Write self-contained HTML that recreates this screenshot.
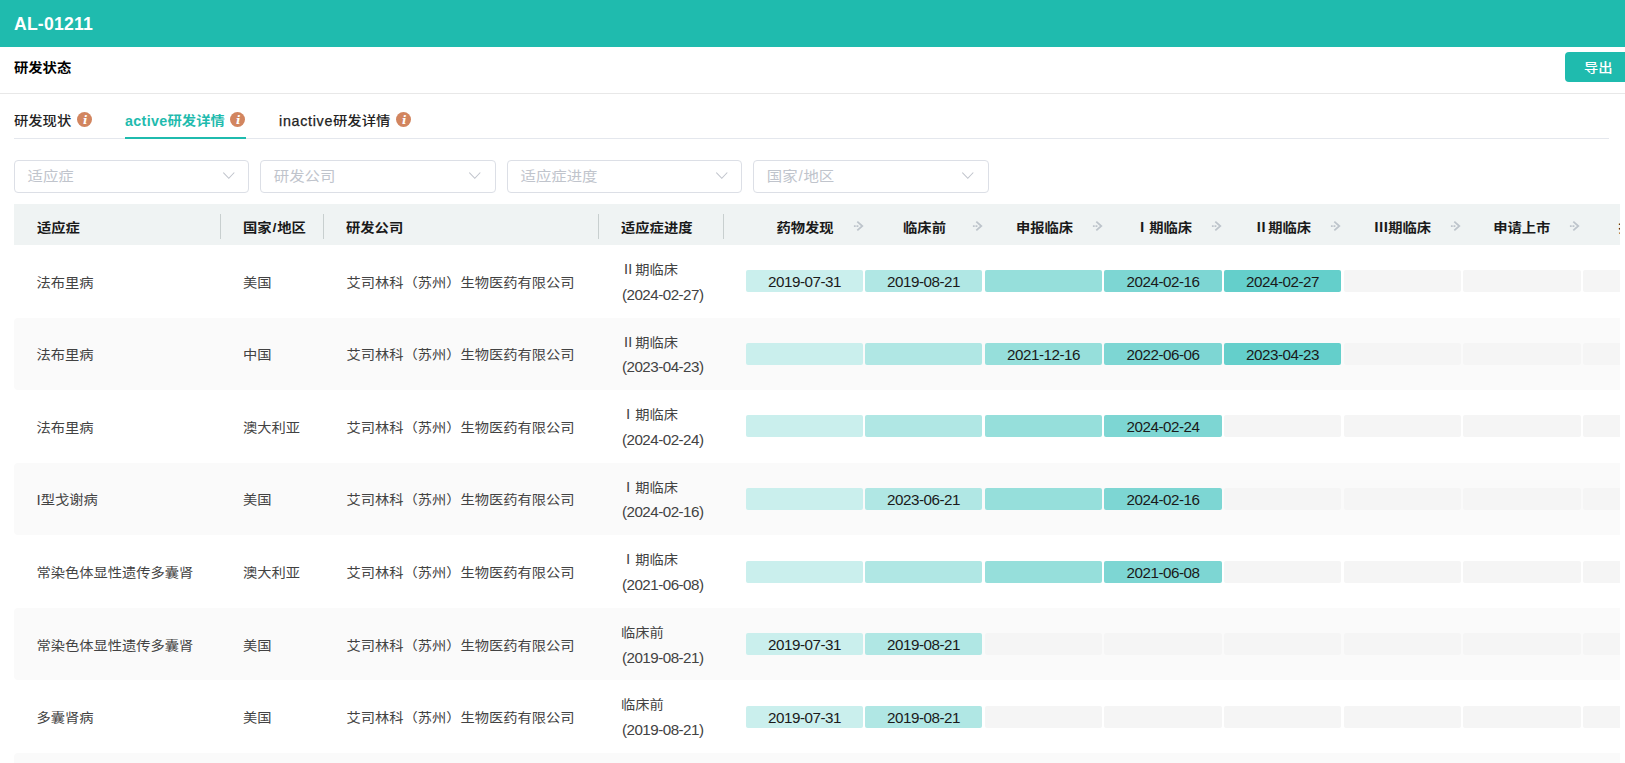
<!DOCTYPE html>
<html lang="zh-CN">
<head>
<meta charset="utf-8">
<title>AL-01211 研发状态</title>
<style>
*{box-sizing:border-box;margin:0;padding:0}
html,body{width:1625px;height:763px;overflow:hidden;background:#fff}
body{font-family:"Liberation Sans", "Noto Sans CJK SC", sans-serif;font-size:14.3px;color:#333;position:relative}
.abs{position:absolute;white-space:nowrap}
.cj{display:inline-block;transform:scaleY(.9);transform-origin:50% 49%}
.topbar{position:absolute;left:0;top:0;width:1625px;height:47px;background:#1fbbae}
.title{left:14px;top:10px;font-size:17.6px;font-weight:700;color:#fff;line-height:28px;letter-spacing:.21px}
.sect{left:14px;top:54px;font-weight:700;color:#000;line-height:28px}
.hr1{position:absolute;left:0;top:93px;width:1625px;height:1px;background:#e8e8e8}
.export{position:absolute;left:1565px;top:52px;width:70px;height:30px;background:#1fbbae;border-radius:4px;color:#fff;font-size:14.3px;line-height:32px;padding-left:19px;font-weight:500}
.tab{top:107px;line-height:28px;color:#222;font-weight:500}
.tab.on{color:#1fbbae;font-weight:700}
.tab.on .la{letter-spacing:.34px;-webkit-text-stroke:0}
.tab .la{letter-spacing:.7px;-webkit-text-stroke:.25px #222}
.sl{margin:0 .8px}
.bi{font-size:15.2px;margin-right:-.1px}
.info{position:absolute;width:15px;height:15px;border-radius:50%;background:#d2855f;top:112px}
.info svg{position:absolute;left:0;top:0}
.tabline{position:absolute;left:14px;top:138px;width:1595px;height:1px;background:#e4e7ed}
.tabink{position:absolute;left:125px;top:137px;width:121px;height:2px;background:#1fbbae}
.sel{position:absolute;top:160px;height:32.5px;border:1px solid #dcdfe6;border-radius:4px;background:#fff;color:#c0c4cc;font-size:15.4px;line-height:32px;padding-left:12.5px}
.sel svg{position:absolute;left:208px;top:11px}
.thead{position:absolute;left:14px;top:204px;width:1606px;height:41px;background:#eff3f3;overflow:hidden}
.th{font-weight:700;color:#1a1a1a;line-height:24px;top:12px}
.sep{position:absolute;top:10px;width:1px;height:25px;background:#c8cfcf}
.arrow{position:absolute;top:15px}
.row{position:absolute;left:14px;width:1606px;overflow:hidden}
.td.dt{letter-spacing:-.53px;font-size:15.2px}
.row.odd{background:#fafafa;border-radius:4px 0 0 4px}
.td{line-height:24px;color:#424242;font-size:14.25px}
.bar{position:absolute;height:22px;width:117px;border-radius:2px;font-size:15.2px;letter-spacing:-.47px;line-height:24px;text-align:center;color:#1a1a1a;background:#f5f5f5}
.b0{background:#caefed}.b1{background:#b0e7e4}.b2{background:#96dfdb}.b3{background:#7dd6d3}.b4{background:#64cfcb}
</style>
</head>
<body>
<div class="topbar"><div class="abs title">AL-01211</div></div>
<div class="abs sect cj">研发状态</div>
<div class="export"><span class="cj">导出</span></div>
<div class="hr1"></div>
<div class="tabs">
<div class="abs tab cj" style="left:14px">研发现状</div><span class="info" style="left:77px"><svg width="15" height="15" viewBox="0 0 15 15"><text x="8.2" y="12.2" text-anchor="middle" font-family="'DejaVu Serif', 'Liberation Serif', serif" font-style="italic" font-weight="700" font-size="11.8" fill="#fff">i</text></svg></span>
<div class="abs tab on" style="left:125px"><span class="la">active</span><span class="cj">研发详情</span></div><span class="info" style="left:230.3px"><svg width="15" height="15" viewBox="0 0 15 15"><text x="8.2" y="12.2" text-anchor="middle" font-family="'DejaVu Serif', 'Liberation Serif', serif" font-style="italic" font-weight="700" font-size="11.8" fill="#fff">i</text></svg></span>
<div class="abs tab" style="left:279px"><span class="la">inactive</span><span class="cj">研发详情</span></div><span class="info" style="left:395.5px"><svg width="15" height="15" viewBox="0 0 15 15"><text x="8.2" y="12.2" text-anchor="middle" font-family="'DejaVu Serif', 'Liberation Serif', serif" font-style="italic" font-weight="700" font-size="11.8" fill="#fff">i</text></svg></span>
<div class="tabline"></div><div class="tabink"></div>
</div>
<div class="sel" style="left:14px;width:234.5px"><span class="cj">适应症</span><svg width="12" height="8" viewBox="0 0 12 8"><path d="M0.3 0.5 L5.8 6.3 L11.3 0.5" fill="none" stroke="#c0c4cc" stroke-width="1.05"/></svg></div>
<div class="sel" style="left:260.3px;width:235.4px"><span class="cj">研发公司</span><svg width="12" height="8" viewBox="0 0 12 8"><path d="M0.3 0.5 L5.8 6.3 L11.3 0.5" fill="none" stroke="#c0c4cc" stroke-width="1.05"/></svg></div>
<div class="sel" style="left:507px;width:235.0px"><span class="cj">适应症进度</span><svg width="12" height="8" viewBox="0 0 12 8"><path d="M0.3 0.5 L5.8 6.3 L11.3 0.5" fill="none" stroke="#c0c4cc" stroke-width="1.05"/></svg></div>
<div class="sel" style="left:753.3px;width:235.4px"><span class="cj">国家<span class="sl">/</span>地区</span><svg width="12" height="8" viewBox="0 0 12 8"><path d="M0.3 0.5 L5.8 6.3 L11.3 0.5" fill="none" stroke="#c0c4cc" stroke-width="1.05"/></svg></div>
<div class="thead">
<div class="abs th cj" style="left:23px">适应症</div><div class="abs th cj" style="left:229px">国家<span class="sl">/</span>地区</div><div class="abs th cj" style="left:332px">研发公司</div><div class="abs th cj" style="left:607px">适应症进度</div><div class="sep" style="left:206px"></div><div class="sep" style="left:309px"></div><div class="sep" style="left:584px"></div><div class="sep" style="left:709px"></div>
<div class="abs th cj" style="left:731.0px;width:120px;text-align:center">药物发现</div><span class="arrow" style="left:839.0px"><svg width="12" height="12" viewBox="0 0 12 12"><path d="M0.9 6 H2.7 M3.5 6 H5.4 M4.3 1.6 L9.3 6 L4.3 10.4" fill="none" stroke="#bdc4cb" stroke-width="1.75"/></svg></span>
<div class="abs th cj" style="left:850.5px;width:120px;text-align:center">临床前</div><span class="arrow" style="left:958.3px"><svg width="12" height="12" viewBox="0 0 12 12"><path d="M0.9 6 H2.7 M3.5 6 H5.4 M4.3 1.6 L9.3 6 L4.3 10.4" fill="none" stroke="#bdc4cb" stroke-width="1.75"/></svg></span>
<div class="abs th cj" style="left:970.5px;width:120px;text-align:center">申报临床</div><span class="arrow" style="left:1077.6px"><svg width="12" height="12" viewBox="0 0 12 12"><path d="M0.9 6 H2.7 M3.5 6 H5.4 M4.3 1.6 L9.3 6 L4.3 10.4" fill="none" stroke="#bdc4cb" stroke-width="1.75"/></svg></span>
<div class="abs th cj" style="left:1089.5px;width:120px;text-align:center">Ⅰ期临床</div><span class="arrow" style="left:1196.9px"><svg width="12" height="12" viewBox="0 0 12 12"><path d="M0.9 6 H2.7 M3.5 6 H5.4 M4.3 1.6 L9.3 6 L4.3 10.4" fill="none" stroke="#bdc4cb" stroke-width="1.75"/></svg></span>
<div class="abs th cj" style="left:1208.5px;width:120px;text-align:center">Ⅱ期临床</div><span class="arrow" style="left:1316.2px"><svg width="12" height="12" viewBox="0 0 12 12"><path d="M0.9 6 H2.7 M3.5 6 H5.4 M4.3 1.6 L9.3 6 L4.3 10.4" fill="none" stroke="#bdc4cb" stroke-width="1.75"/></svg></span>
<div class="abs th cj" style="left:1328.5px;width:120px;text-align:center">Ⅲ期临床</div><span class="arrow" style="left:1435.5px"><svg width="12" height="12" viewBox="0 0 12 12"><path d="M0.9 6 H2.7 M3.5 6 H5.4 M4.3 1.6 L9.3 6 L4.3 10.4" fill="none" stroke="#bdc4cb" stroke-width="1.75"/></svg></span>
<div class="abs th cj" style="left:1447.8px;width:120px;text-align:center">申请上市</div><span class="arrow" style="left:1554.8px"><svg width="12" height="12" viewBox="0 0 12 12"><path d="M0.9 6 H2.7 M3.5 6 H5.4 M4.3 1.6 L9.3 6 L4.3 10.4" fill="none" stroke="#bdc4cb" stroke-width="1.75"/></svg></span>
<div class="abs th cj" style="left:1573.1px;width:120px;text-align:center">批准上市</div><span class="arrow" style="left:1674.1px"><svg width="12" height="12" viewBox="0 0 12 12"><path d="M0.9 6 H2.7 M3.5 6 H5.4 M4.3 1.6 L9.3 6 L4.3 10.4" fill="none" stroke="#bdc4cb" stroke-width="1.75"/></svg></span>
</div>
<div class="row" style="top:245px;height:73px"><div class="abs td cj" style="left:22.5px;top:26px">法布里病</div><div class="abs td cj" style="left:229px;top:26px">美国</div><div class="abs td cj" style="left:332.6px;top:26px">艾司林科（苏州）生物医药有限公司</div><div class="abs td cj" style="left:607px;top:13px">Ⅱ期临床</div><div class="abs td dt" style="left:608px;top:38px">(2024-02-27)</div>
<div class="bar b0" style="left:732px;top:25px;width:117px">2019-07-31</div><div class="bar b1" style="left:851px;top:25px;width:117px">2019-08-21</div><div class="bar b2" style="left:971px;top:25px;width:117px"></div><div class="bar b3" style="left:1090px;top:25px;width:118px">2024-02-16</div><div class="bar b4" style="left:1210px;top:25px;width:117px">2024-02-27</div><div class="bar" style="left:1330px;top:25px;width:117px"></div><div class="bar" style="left:1449px;top:25px;width:118px"></div><div class="bar" style="left:1569px;top:25px;width:117px"></div></div>
<div class="row odd" style="top:318px;height:72px"><div class="abs td cj" style="left:22.5px;top:25px">法布里病</div><div class="abs td cj" style="left:229px;top:25px">中国</div><div class="abs td cj" style="left:332.6px;top:25px">艾司林科（苏州）生物医药有限公司</div><div class="abs td cj" style="left:607px;top:13px">Ⅱ期临床</div><div class="abs td dt" style="left:608px;top:37px">(2023-04-23)</div>
<div class="bar b0" style="left:732px;top:25px;width:117px"></div><div class="bar b1" style="left:851px;top:25px;width:117px"></div><div class="bar b2" style="left:971px;top:25px;width:117px">2021-12-16</div><div class="bar b3" style="left:1090px;top:25px;width:118px">2022-06-06</div><div class="bar b4" style="left:1210px;top:25px;width:117px">2023-04-23</div><div class="bar" style="left:1330px;top:25px;width:117px"></div><div class="bar" style="left:1449px;top:25px;width:118px"></div><div class="bar" style="left:1569px;top:25px;width:117px"></div></div>
<div class="row" style="top:390px;height:73px"><div class="abs td cj" style="left:22.5px;top:26px">法布里病</div><div class="abs td cj" style="left:229px;top:26px">澳大利亚</div><div class="abs td cj" style="left:332.6px;top:26px">艾司林科（苏州）生物医药有限公司</div><div class="abs td cj" style="left:607px;top:13px">Ⅰ期临床</div><div class="abs td dt" style="left:608px;top:38px">(2024-02-24)</div>
<div class="bar b0" style="left:732px;top:25px;width:117px"></div><div class="bar b1" style="left:851px;top:25px;width:117px"></div><div class="bar b2" style="left:971px;top:25px;width:117px"></div><div class="bar b3" style="left:1090px;top:25px;width:118px">2024-02-24</div><div class="bar" style="left:1210px;top:25px;width:117px"></div><div class="bar" style="left:1330px;top:25px;width:117px"></div><div class="bar" style="left:1449px;top:25px;width:118px"></div><div class="bar" style="left:1569px;top:25px;width:117px"></div></div>
<div class="row odd" style="top:463px;height:72px"><div class="abs td" style="left:22.5px;top:25px"><span class="bi">I</span><span class="cj">型戈谢病</span></div><div class="abs td cj" style="left:229px;top:25px">美国</div><div class="abs td cj" style="left:332.6px;top:25px">艾司林科（苏州）生物医药有限公司</div><div class="abs td cj" style="left:607px;top:13px">Ⅰ期临床</div><div class="abs td dt" style="left:608px;top:37px">(2024-02-16)</div>
<div class="bar b0" style="left:732px;top:25px;width:117px"></div><div class="bar b1" style="left:851px;top:25px;width:117px">2023-06-21</div><div class="bar b2" style="left:971px;top:25px;width:117px"></div><div class="bar b3" style="left:1090px;top:25px;width:118px">2024-02-16</div><div class="bar" style="left:1210px;top:25px;width:117px"></div><div class="bar" style="left:1330px;top:25px;width:117px"></div><div class="bar" style="left:1449px;top:25px;width:118px"></div><div class="bar" style="left:1569px;top:25px;width:117px"></div></div>
<div class="row" style="top:535px;height:73px"><div class="abs td cj" style="left:22.5px;top:26px">常染色体显性遗传多囊肾</div><div class="abs td cj" style="left:229px;top:26px">澳大利亚</div><div class="abs td cj" style="left:332.6px;top:26px">艾司林科（苏州）生物医药有限公司</div><div class="abs td cj" style="left:607px;top:13px">Ⅰ期临床</div><div class="abs td dt" style="left:608px;top:38px">(2021-06-08)</div>
<div class="bar b0" style="left:732px;top:26px;width:117px"></div><div class="bar b1" style="left:851px;top:26px;width:117px"></div><div class="bar b2" style="left:971px;top:26px;width:117px"></div><div class="bar b3" style="left:1090px;top:26px;width:118px">2021-06-08</div><div class="bar" style="left:1210px;top:26px;width:117px"></div><div class="bar" style="left:1330px;top:26px;width:117px"></div><div class="bar" style="left:1449px;top:26px;width:118px"></div><div class="bar" style="left:1569px;top:26px;width:117px"></div></div>
<div class="row odd" style="top:608px;height:72px"><div class="abs td cj" style="left:22.5px;top:26px">常染色体显性遗传多囊肾</div><div class="abs td cj" style="left:229px;top:26px">美国</div><div class="abs td cj" style="left:332.6px;top:26px">艾司林科（苏州）生物医药有限公司</div><div class="abs td cj" style="left:607px;top:13px">临床前</div><div class="abs td dt" style="left:608px;top:38px">(2019-08-21)</div>
<div class="bar b0" style="left:732px;top:25px;width:117px">2019-07-31</div><div class="bar b1" style="left:851px;top:25px;width:117px">2019-08-21</div><div class="bar" style="left:971px;top:25px;width:117px"></div><div class="bar" style="left:1090px;top:25px;width:118px"></div><div class="bar" style="left:1210px;top:25px;width:117px"></div><div class="bar" style="left:1330px;top:25px;width:117px"></div><div class="bar" style="left:1449px;top:25px;width:118px"></div><div class="bar" style="left:1569px;top:25px;width:117px"></div></div>
<div class="row" style="top:680px;height:73px"><div class="abs td cj" style="left:22.5px;top:26px">多囊肾病</div><div class="abs td cj" style="left:229px;top:26px">美国</div><div class="abs td cj" style="left:332.6px;top:26px">艾司林科（苏州）生物医药有限公司</div><div class="abs td cj" style="left:607px;top:13px">临床前</div><div class="abs td dt" style="left:608px;top:38px">(2019-08-21)</div>
<div class="bar b0" style="left:732px;top:26px;width:117px">2019-07-31</div><div class="bar b1" style="left:851px;top:26px;width:117px">2019-08-21</div><div class="bar" style="left:971px;top:26px;width:117px"></div><div class="bar" style="left:1090px;top:26px;width:118px"></div><div class="bar" style="left:1210px;top:26px;width:117px"></div><div class="bar" style="left:1330px;top:26px;width:117px"></div><div class="bar" style="left:1449px;top:26px;width:118px"></div><div class="bar" style="left:1569px;top:26px;width:117px"></div></div>
<div class="row odd" style="top:753px;height:73px"></div>
</body>
</html>
